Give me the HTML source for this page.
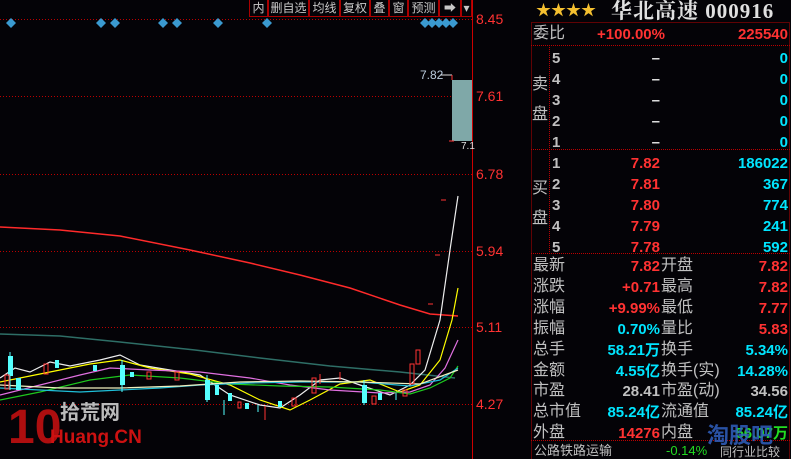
<!DOCTYPE html>
<html><head><meta charset="utf-8"><style>
body{margin:0;width:791px;height:459px;background:#040307;overflow:hidden;position:relative;font-family:"Liberation Sans","Noto Sans CJK SC",sans-serif;}
.a{position:absolute;white-space:nowrap;line-height:1;}
.g{color:#c0c0c0}.r{color:#ff3232}.c{color:#00e5ff}.w{color:#e0e0e0}.gr{color:#22dd22}
.tb{position:absolute;top:0;height:17px;border:1px solid #a00;border-top:none;color:#c8c8c8;font-size:12px;line-height:17px;text-align:center;background:#040307;white-space:nowrap;overflow:hidden;box-sizing:border-box}
.f{font-size:15px;font-weight:bold;}
.lab{font-size:16px;}
</style></head><body>
<svg width="791" height="459" style="position:absolute;left:0;top:0">
<g stroke="#b00" stroke-dasharray="1,2" stroke-width="1">
<line x1="0" y1="19.5" x2="472" y2="19.5"/><line x1="0" y1="96.5" x2="452" y2="96.5"/>
<line x1="0" y1="174.5" x2="472" y2="174.5"/><line x1="0" y1="251.5" x2="472" y2="251.5"/>
<line x1="0" y1="327.5" x2="472" y2="327.5"/><line x1="0" y1="404.5" x2="472" y2="404.5"/>
</g>
<line x1="472.5" y1="0" x2="472.5" y2="459" stroke="#c00"/>
<g fill="#3a9ad0">
<path d="M11 18l5 5-5 5-5-5z"/><path d="M101 18l5 5-5 5-5-5z"/><path d="M115 18l5 5-5 5-5-5z"/><path d="M163 18l5 5-5 5-5-5z"/><path d="M177 18l5 5-5 5-5-5z"/><path d="M218 18l5 5-5 5-5-5z"/><path d="M267 18l5 5-5 5-5-5z"/>
<path d="M425 18l5 5-5 5-5-5z"/><path d="M432 18l5 5-5 5-5-5z"/><path d="M439 18l5 5-5 5-5-5z"/><path d="M446 18l5 5-5 5-5-5z"/><path d="M453 18l5 5-5 5-5-5z"/>
</g>
<rect x="452" y="80" width="20" height="61" fill="#7fa8a8"/>
<line x1="440" y1="75" x2="452" y2="75" stroke="#ddd"/><line x1="452" y1="75" x2="452" y2="80" stroke="#f33"/>
<line x1="449" y1="141" x2="454" y2="141" stroke="#f33"/>
<polyline fill="none" stroke="#2e6e66" stroke-width="1.5" points="0,334 60,336 120,342 195,350 260,358 330,366 400,372 455,378"/>
<polyline fill="none" stroke="#ff2a2a" stroke-width="1.5" points="0,227 60,230 120,236 190,250 250,263 300,275 350,288 400,305 430,314 458,316"/>
<polyline fill="none" stroke="#eee" stroke-width="1.2" points="0,378 15,368 30,372 50,362 70,366 100,360 120,355 140,365 170,370 200,375 230,395 260,405 280,408 300,395 320,380 340,378 360,385 390,395 410,385 425,370 440,320 450,250 458,196"/>
<polyline fill="none" stroke="#ff0" stroke-width="1.2" points="0,382 30,376 60,370 90,364 120,360 150,368 190,374 230,385 260,400 290,410 310,400 340,384 370,380 400,392 420,385 440,360 452,320 458,288"/>
<polyline fill="none" stroke="#e070e0" stroke-width="1.2" points="0,395 40,385 80,375 110,368 150,370 200,372 250,378 290,385 330,390 380,393 410,392 430,385 445,368 458,340"/>
<polyline fill="none" stroke="#1ec81e" stroke-width="1.2" points="0,400 40,392 90,380 130,375 180,378 230,384 280,386 330,387 380,390 410,394 430,388 450,378 458,366"/>
<polyline fill="none" stroke="#1fbfd8" stroke-width="1.2" points="0,388 40,390 80,392 120,390 160,388 200,385 250,383 300,382 360,382 410,386 440,380 458,368"/>
<polyline fill="none" stroke="#f0f0c0" stroke-width="1.2" points="0,385 60,388 120,388 180,386 240,382 300,381 360,382 420,384 458,370"/>
<g fill="#5ff">
<rect x="8" y="356" width="5" height="20"/><rect x="16" y="378" width="5" height="12"/><rect x="55" y="360" width="4" height="8"/><rect x="93" y="365" width="4" height="6"/><rect x="120" y="365" width="5" height="20"/><rect x="130" y="372" width="4" height="5"/><rect x="205" y="380" width="5" height="20"/><rect x="215" y="385" width="4" height="10"/><rect x="228" y="393" width="4" height="8"/><rect x="245" y="403" width="4" height="6"/><rect x="278" y="401" width="4" height="6"/><rect x="362" y="385" width="5" height="18"/><rect x="378" y="393" width="4" height="7"/>
</g>
<g stroke="#5ff"><line x1="10" y1="352" x2="10" y2="390"/><line x1="122" y1="360" x2="122" y2="392"/><line x1="207" y1="375" x2="207" y2="402"/><line x1="224" y1="400" x2="224" y2="415"/><line x1="258" y1="405" x2="258" y2="412"/><line x1="364" y1="380" x2="364" y2="405"/><line x1="396" y1="393" x2="396" y2="400"/></g>
<g fill="none" stroke="#f33">
<rect x="5" y="375" width="4" height="14"/><rect x="44" y="364" width="4" height="10"/><rect x="147" y="372" width="4" height="7"/><rect x="175" y="372" width="4" height="8"/><rect x="238" y="402" width="3" height="6"/><rect x="292" y="398" width="4" height="8"/><rect x="312" y="378" width="4" height="15"/><rect x="372" y="396" width="4" height="8"/><rect x="403" y="390" width="4" height="6"/><rect x="410" y="364" width="4" height="20"/><rect x="416" y="350" width="4" height="14"/>
</g>
<g stroke="#f33"><line x1="265" y1="406" x2="265" y2="420"/><line x1="320" y1="374" x2="320" y2="384"/><line x1="340" y1="372" x2="340" y2="380"/><line x1="441" y1="200" x2="446" y2="200"/><line x1="435" y1="255" x2="440" y2="255"/><line x1="428" y1="304" x2="433" y2="304"/></g>
<rect x="531.5" y="22.5" width="258" height="440" fill="none" stroke="#b00" stroke-dasharray="1,1"/>
<g stroke="#b00" stroke-dasharray="1,1"><line x1="531" y1="45.5" x2="790" y2="45.5"/><line x1="531" y1="149.5" x2="790" y2="149.5"/><line x1="531" y1="253.5" x2="790" y2="253.5"/><line x1="531" y1="440.5" x2="790" y2="440.5"/><line x1="549.5" y1="45" x2="549.5" y2="253"/></g>
</svg>
<div class="tb" style="left:249px;width:19px">内</div><div class="tb" style="left:268px;width:41px">删自选</div><div class="tb" style="left:309px;width:31px">均线</div><div class="tb" style="left:340px;width:30px">复权</div><div class="tb" style="left:370px;width:19px">叠</div><div class="tb" style="left:389px;width:19px">窗</div><div class="tb" style="left:408px;width:31px">预测</div><div class="tb" style="left:439px;width:22px">➡</div><div class="tb" style="left:461px;width:11px">▾</div>
<div class="a r" style="left:476px;top:12px;font-size:14px">8.45</div>
<div class="a r" style="left:476px;top:89px;font-size:14px">7.61</div>
<div class="a r" style="left:476px;top:167px;font-size:14px">6.78</div>
<div class="a r" style="left:476px;top:244px;font-size:14px">5.94</div>
<div class="a r" style="left:476px;top:320px;font-size:14px">5.11</div>
<div class="a r" style="left:476px;top:397px;font-size:14px">4.27</div>
<div class="a" style="left:420px;top:69px;font-size:12px;color:#bcd">7.82</div>
<div class="a w" style="left:461px;top:142px;font-size:10px">7.1</div>
<div class="a" style="left:8px;top:404px;font-size:48px;font-weight:bold;color:#c11;opacity:.85">10</div>
<div class="a" style="left:60px;top:403px;font-size:20px;color:#bbb;font-weight:bold">拾荒网</div>
<div class="a" style="left:50px;top:428px;font-size:19px;color:#c11;font-weight:bold">Huang.CN</div>
<div class="a" style="left:536px;top:3px;font-size:15px;color:#f5c030">★★★★</div>
<div class="a w" style="left:611px;top:1px;font-size:21px;font-weight:bold;font-family:'Liberation Serif','Noto Serif CJK SC',serif;letter-spacing:1px">华北高速 000916</div>
<div class="a g lab" style="left:533px;top:26px">委比</div>
<div class="a r f" style="left:597px;top:27px">+100.00%</div>
<div class="a r f" style="right:3px;top:27px">225540</div>
<div class="a g lab" style="left:532px;top:70px;line-height:30px;width:16px;white-space:normal">卖 盘</div>
<div class="a g lab" style="left:532px;top:174px;line-height:30px;width:16px;white-space:normal">买 盘</div>
<div class="a g f" style="left:552px;top:48px;line-height:21px">5<br>4<br>3<br>2<br>1<br>1<br>2<br>3<br>4<br>5</div>
<div class="a w f" style="right:131px;top:48px;line-height:21px;text-align:right">–<br>–<br>–<br>–<br>–</div>
<div class="a r f" style="right:131px;top:153px;line-height:21px;text-align:right">7.82<br>7.81<br>7.80<br>7.79<br>7.78</div>
<div class="a c f" style="right:3px;top:48px;line-height:21px;text-align:right">0<br>0<br>0<br>0<br>0<br>186022<br>367<br>774<br>241<br>592</div>
<div class="a g lab" style="left:533px;top:256px;line-height:20.9px">最新<br>涨跌<br>涨幅<br>振幅<br>总手<br>金额<br>市盈<br>总市值<br>外盘</div>
<div class="a g lab" style="left:661px;top:256px;line-height:20.9px">开盘<br>最高<br>最低<br>量比<br>换手<br>换手(实)<br>市盈(动)<br>流通值<br>内盘</div>
<div class="a f" style="right:131px;top:257px;line-height:20.9px;text-align:right"><span class="r">7.82</span><br><span class="r">+0.71</span><br><span class="r">+9.99%</span><br><span class="c">0.70%</span><br><span class="c">58.21万</span><br><span class="c">4.55亿</span><br><span class="g">28.41</span><br><span class="c">85.24亿</span><br><span class="r">14276</span></div>
<div class="a f" style="right:3px;top:257px;line-height:20.9px;text-align:right"><span class="r">7.82</span><br><span class="r">7.82</span><br><span class="r">7.77</span><br><span class="r">5.83</span><br><span class="c">5.34%</span><br><span class="c">14.28%</span><br><span class="g">34.56</span><br><span class="c">85.24亿</span><br><span class="gr">56.07万</span></div>
<div class="a" style="left:707px;top:425px;font-size:22px;font-weight:bold;color:#3060c0;opacity:.85">淘股吧</div>
<div class="a g" style="left:534px;top:444px;font-size:13px">公路铁路运输</div>
<div class="a gr" style="left:666px;top:444px;font-size:13px">-0.14%</div>
<div class="a g" style="left:720px;top:446px;font-size:12px">同行业比较</div>
</body></html>
